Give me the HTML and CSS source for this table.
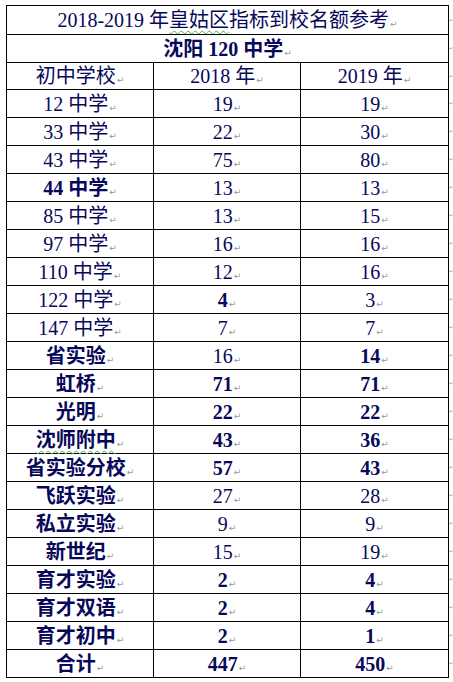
FILE: index.html
```html
<!DOCTYPE html>
<html lang="zh">
<head>
<meta charset="utf-8">
<title>2018-2019 年皇姑区指标到校名额参考</title>
<link rel="stylesheet" href="styles.css">
</head>
<body>
<table class="quota">
  <colgroup>
    <col class="c1"><col class="c2"><col class="c3"><col class="c4">
  </colgroup>
  <tr class="r-title"><td colspan="3">2018-2019 年<span class="wavy">皇姑区</span>指标到校名额参考<span class="pm">↵</span></td><td class="eor">↵</td></tr>
  <tr class="r-sub"><td colspan="3" class="b">沈阳 120 中学<span class="pm">↵</span></td><td class="eor">↵</td></tr>
  <tr class="r-head"><td>初中学校<span class="pm">↵</span></td><td>2018 年<span class="pm">↵</span></td><td>2019 年<span class="pm">↵</span></td><td class="eor">↵</td></tr>
  <tr><td>12 中学<span class="pm">↵</span></td><td>19<span class="pm">↵</span></td><td>19<span class="pm">↵</span></td><td class="eor">↵</td></tr>
  <tr><td>33 中学<span class="pm">↵</span></td><td>22<span class="pm">↵</span></td><td>30<span class="pm">↵</span></td><td class="eor">↵</td></tr>
  <tr><td>43 中学<span class="pm">↵</span></td><td>75<span class="pm">↵</span></td><td>80<span class="pm">↵</span></td><td class="eor">↵</td></tr>
  <tr><td class="b">44 中学<span class="pm">↵</span></td><td>13<span class="pm">↵</span></td><td>13<span class="pm">↵</span></td><td class="eor">↵</td></tr>
  <tr><td>85 中学<span class="pm">↵</span></td><td>13<span class="pm">↵</span></td><td>15<span class="pm">↵</span></td><td class="eor">↵</td></tr>
  <tr><td>97 中学<span class="pm">↵</span></td><td>16<span class="pm">↵</span></td><td>16<span class="pm">↵</span></td><td class="eor">↵</td></tr>
  <tr><td>110 中学<span class="pm">↵</span></td><td>12<span class="pm">↵</span></td><td>16<span class="pm">↵</span></td><td class="eor">↵</td></tr>
  <tr><td>122 中学<span class="pm">↵</span></td><td class="b">4<span class="pm">↵</span></td><td>3<span class="pm">↵</span></td><td class="eor">↵</td></tr>
  <tr><td>147 中学<span class="pm">↵</span></td><td>7<span class="pm">↵</span></td><td>7<span class="pm">↵</span></td><td class="eor">↵</td></tr>
  <tr><td class="b">省实验<span class="pm">↵</span></td><td>16<span class="pm">↵</span></td><td class="b">14<span class="pm">↵</span></td><td class="eor">↵</td></tr>
  <tr><td class="b">虹桥<span class="pm">↵</span></td><td class="b">71<span class="pm">↵</span></td><td class="b">71<span class="pm">↵</span></td><td class="eor">↵</td></tr>
  <tr><td class="b">光明<span class="pm">↵</span></td><td class="b">22<span class="pm">↵</span></td><td class="b">22<span class="pm">↵</span></td><td class="eor">↵</td></tr>
  <tr><td class="b"><span class="wavy">沈师附中</span><span class="pm">↵</span></td><td class="b">43<span class="pm">↵</span></td><td class="b">36<span class="pm">↵</span></td><td class="eor">↵</td></tr>
  <tr><td class="b">省实验分校<span class="pm">↵</span></td><td class="b">57<span class="pm">↵</span></td><td class="b">43<span class="pm">↵</span></td><td class="eor">↵</td></tr>
  <tr><td class="b">飞跃实验<span class="pm">↵</span></td><td>27<span class="pm">↵</span></td><td>28<span class="pm">↵</span></td><td class="eor">↵</td></tr>
  <tr><td class="b">私立实验<span class="pm">↵</span></td><td>9<span class="pm">↵</span></td><td>9<span class="pm">↵</span></td><td class="eor">↵</td></tr>
  <tr><td class="b">新世纪<span class="pm">↵</span></td><td>15<span class="pm">↵</span></td><td>19<span class="pm">↵</span></td><td class="eor">↵</td></tr>
  <tr><td class="b">育才实验<span class="pm">↵</span></td><td class="b">2<span class="pm">↵</span></td><td class="b">4<span class="pm">↵</span></td><td class="eor">↵</td></tr>
  <tr><td class="b">育才双语<span class="pm">↵</span></td><td class="b">2<span class="pm">↵</span></td><td class="b">4<span class="pm">↵</span></td><td class="eor">↵</td></tr>
  <tr><td class="b">育才初中<span class="pm">↵</span></td><td class="b">2<span class="pm">↵</span></td><td class="b">1<span class="pm">↵</span></td><td class="eor">↵</td></tr>
  <tr><td class="b">合计<span class="pm">↵</span></td><td class="b">447<span class="pm">↵</span></td><td class="b">450<span class="pm">↵</span></td><td class="eor">↵</td></tr>
</table>
</body>
</html>
```

FILE: styles.css
```css
html, body {
  margin: 0;
  padding: 0;
  background: #ffffff;
}

body {
  padding: 5px 0 0 6px;
  overflow: hidden;
}

.quota {
  border-collapse: collapse;
  table-layout: fixed;
  width: 447px;
  font-family: "Liberation Serif", "Noto Sans CJK SC", serif;
  font-size: 20px;
  color: #08085a;
}

.c1 { width: 147px; }
.c2 { width: 147px; }
.c3 { width: 148px; }
.c4 { width: 5px; }

.quota td {
  border: 1px solid #000000;
  padding: 0;
  height: 27px;
  line-height: 18px;
  text-align: center;
  white-space: nowrap;
  vertical-align: middle;
}

.quota .r-title td { height: 28px; }
.quota .r-head td { height: 26px; }

.quota td.eor {
  border: none;
  text-align: left;
  padding-left: 0;
  font-family: "DejaVu Sans", sans-serif;
  font-size: 5px;
  line-height: 5px;
  color: #9a9a9a;
}

.b {
  font-weight: bold;
}

.pm {
  font-family: "DejaVu Sans", sans-serif;
  font-size: 9px;
  line-height: 0;
  font-weight: normal;
  color: #9a9a9a;
  margin-left: 1px;
}

.wavy {
  text-decoration: underline wavy #4caf50;
  text-decoration-thickness: 1px;
  text-underline-offset: 3px;
}
```
